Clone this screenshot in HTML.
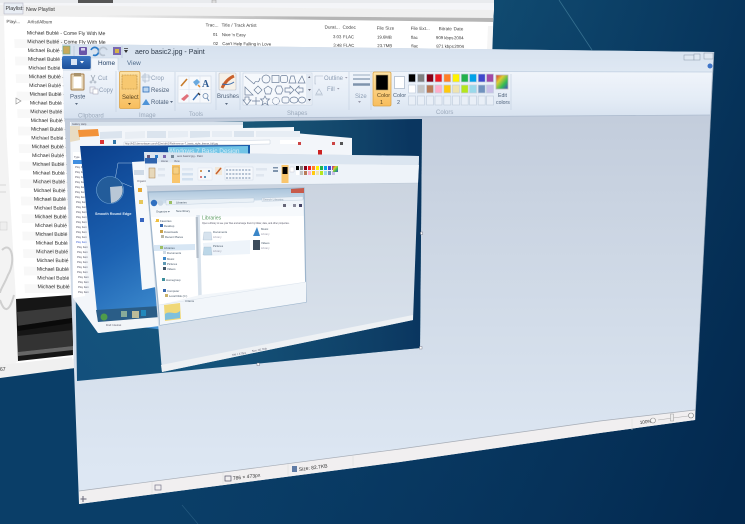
<!DOCTYPE html>
<html><head><meta charset="utf-8"><title>aero basic2.jpg - Paint</title>
<style>
html,body{margin:0;padding:0;width:745px;height:524px;overflow:hidden;background:#0b4168}
svg{display:block;position:absolute;left:0;top:0;filter:blur(.35px)}
text{font-family:"Liberation Sans",sans-serif}
.r{font-size:6px;fill:#4d6079}
.d{font-size:6px;fill:#8d9db3}
.l{font-size:5.1px;fill:#2a2a2a}
.h{font-size:4.6px;fill:#444}
.n{font-size:4.3px;fill:#333}
.lb{font-size:6px;fill:#9aa8ba}
.t{font-size:2.6px;fill:#556}
.e{font-size:2.8px;fill:#456}
.s{font-size:5px;fill:#333}
.p{fill:none;stroke:#6d7f9a;stroke-width:.7}
</style></head><body>
<svg width="745" height="524" viewBox="0 0 745 524" xmlns="http://www.w3.org/2000/svg">
<defs>
<radialGradient id="dk" gradientUnits="userSpaceOnUse" cx="570" cy="10" r="560">
<stop offset="0" stop-color="#1f6c8c"/><stop offset=".4" stop-color="#135478"/><stop offset=".8" stop-color="#0c436c"/><stop offset="1" stop-color="#0a3e68"/></radialGradient>
<linearGradient id="dk2" gradientUnits="userSpaceOnUse" x1="100" y1="300" x2="720" y2="520"><stop offset="0" stop-color="#0c436c" stop-opacity="0"/><stop offset=".5" stop-color="#07355e" stop-opacity=".7"/><stop offset="1" stop-color="#03294f"/></linearGradient>
<linearGradient id="body" gradientUnits="userSpaceOnUse" x1="400" y1="118" x2="400" y2="470"><stop offset="0" stop-color="#c3cddc"/><stop offset=".45" stop-color="#cfd9e6"/><stop offset="1" stop-color="#dde7f3"/></linearGradient>
<linearGradient id="rib" x1="0" y1="0" x2="0" y2="1"><stop offset="0" stop-color="#f1f5fb"/><stop offset=".6" stop-color="#e4ecf6"/><stop offset="1" stop-color="#d6e1ef"/></linearGradient>
<linearGradient id="tb" x1="0" y1="0" x2="0" y2="1"><stop offset="0" stop-color="#d6e1ee"/><stop offset="1" stop-color="#dfe8f3"/></linearGradient>
<linearGradient id="org" x1="0" y1="0" x2="0" y2="1"><stop offset="0" stop-color="#fde3a7"/><stop offset="1" stop-color="#f8bd5c"/></linearGradient>
<linearGradient id="fb" x1="0" y1="0" x2="0" y2="1"><stop offset="0" stop-color="#3c78c4"/><stop offset="1" stop-color="#1c4f99"/></linearGradient>
<linearGradient id="img" gradientUnits="userSpaceOnUse" x1="420" y1="120" x2="80" y2="380"><stop offset="0" stop-color="#2b7488"/><stop offset=".55" stop-color="#17587c"/><stop offset="1" stop-color="#13507c"/></linearGradient>
<linearGradient id="img2" gradientUnits="userSpaceOnUse" x1="420" y1="350" x2="200" y2="360"><stop offset="0" stop-color="#0a3660"/><stop offset="1" stop-color="#0a3660" stop-opacity="0"/></linearGradient>
<linearGradient id="web" gradientUnits="userSpaceOnUse" x1="80" y1="150" x2="190" y2="330"><stop offset="0" stop-color="#0b3f8c"/><stop offset=".5" stop-color="#1c62b2"/><stop offset="1" stop-color="#4a9ad8"/></linearGradient>
<linearGradient id="exT" x1="0" y1="0" x2="0" y2="1"><stop offset="0" stop-color="#a9c3da"/><stop offset="1" stop-color="#d5e3ef"/></linearGradient>
<linearGradient id="bar" gradientUnits="userSpaceOnUse" x1="100" y1="0" x2="300" y2="0"><stop offset="0" stop-color="#bbb" stop-opacity="0"/><stop offset="1" stop-color="#b5b5b5"/></linearGradient>
<linearGradient id="rb" x1="0" y1="0" x2="1" y2="1"><stop offset="0" stop-color="#d33"/><stop offset=".33" stop-color="#dc3"/><stop offset=".66" stop-color="#3b5"/><stop offset="1" stop-color="#44c"/></linearGradient>
<linearGradient id="ic" gradientUnits="userSpaceOnUse" x1="300" y1="160" x2="300" y2="370"><stop offset="0" stop-color="#c9d2de"/><stop offset="1" stop-color="#dbe4ee"/></linearGradient>
</defs>

<!-- desktop -->
<rect width="745" height="524" fill="url(#dk)"/>
<rect width="745" height="524" fill="url(#dk2)"/>
<path d="M559 0L592 50" stroke="#5f9db5" stroke-width=".8" opacity=".5"/>
<path d="M182 505L198 524" stroke="#4c84a2" stroke-width=".7" opacity=".4"/>

<!-- playlist window -->
<polygon points="0,0 494,0 492,60 75,368 0,378" fill="#f4f4f4"/>
<polygon points="0,0 494,0 494,3 0,3" fill="#e9ebee"/>
<rect x="78" y="0" width="35" height="3" fill="#555"/>
<rect x="212" y="0" width="4" height="4" fill="#ddd" stroke="#999" stroke-width=".5"/>
<polygon points="0,3 494,3 494,10 0,5" fill="#f4f5f8"/>
<polygon points="0,5 494,10 493,22 0,16" fill="#efefef"/>
<polygon points="100,15 493,18 493,22 100,18" fill="url(#bar)"/>
<rect x="4" y="3" width="19" height="11" fill="#e9eef5" stroke="#aab" stroke-width=".5"/>
<text x="5.500" y="10" font-size="5.300" fill="#333">Playlist:</text>
<text x="26" y="11" font-size="5.300" fill="#333">New Playlist</text>
<polygon points="4,16 493,22 491,60 72,360 16,365 8,200" fill="#fff"/>
<polygon points="488,26 493,26 492,50 487,50" fill="#f5f5f5"/>
<g transform="matrix(1,.0095,.042,1,-1.400,0)">
<g fill="#f8f8f8">
<rect x="14" y="39" width="60" height="8.750"/><rect x="14" y="56.500" width="60" height="8.750"/><rect x="14" y="74" width="60" height="8.750"/><rect x="14" y="91.500" width="60" height="8.750"/><rect x="14" y="109" width="60" height="8.750"/><rect x="14" y="126.500" width="60" height="8.750"/><rect x="14" y="144" width="60" height="8.750"/><rect x="14" y="161.500" width="60" height="8.750"/><rect x="14" y="179" width="60" height="8.750"/><rect x="14" y="196.500" width="60" height="8.750"/><rect x="14" y="214" width="60" height="8.750"/><rect x="14" y="231.500" width="60" height="8.750"/><rect x="14" y="249" width="60" height="8.750"/><rect x="14" y="266.500" width="60" height="8.750"/><rect x="14" y="284" width="60" height="8.750"/>
</g>
<text class="h" x="7" y="23">Playi...</text><text class="h" x="28" y="23">Artist/Album</text>
<text class="h" x="206" y="24.500">Trac...</text><text class="h" x="222" y="24.500">Title / Track Artist</text>
<text class="h" x="325" y="25.500">Durat...</text><text class="h" x="343" y="25.500">Codec</text>
<text class="h" x="377" y="26">File Size</text><text class="h" x="411" y="26">File Ext...</text><text class="h" x="439" y="26">Bitrate</text><text class="h" x="454" y="26">Date</text>
<text class="l" x="27" y="34.200">Michael Bublé - Come Fly With Me</text>
<text class="l" x="27" y="42.900">Michael Bublé - Come Fly With Me</text>
<text class="l" x="27" y="51.700">Michael Bublé - Come Fly With Me</text>
<text class="l" x="27" y="60.400">Michael Bublé - Come Fly With Me</text>
<text class="l" x="27" y="69.200">Michael Bublé - Come Fly With Me</text>
<text class="l" x="27" y="77.900">Michael Bublé - Come Fly With Me</text>
<text class="l" x="27" y="86.700">Michael Bublé - Come Fly With Me</text>
<text class="l" x="27" y="95.400">Michael Bublé - Come Fly With Me</text>
<text class="l" x="27" y="104.200">Michael Bublé - Come Fly With Me</text>
<text class="l" x="27" y="112.900">Michael Bublé - Come Fly With Me</text>
<text class="l" x="27" y="121.700">Michael Bublé - Come Fly With Me</text>
<text class="l" x="27" y="130.400">Michael Bublé - Come Fly With Me</text>
<text class="l" x="27" y="139.200">Michael Bublé - Come Fly With Me</text>
<text class="l" x="27" y="147.900">Michael Bublé - Come Fly With Me</text>
<text class="l" x="27" y="156.700">Michael Bublé - Come Fly With Me</text>
<text class="l" x="27" y="165.400">Michael Bublé - Come Fly With Me</text>
<text class="l" x="27" y="174.200">Michael Bublé - Come Fly With Me</text>
<text class="l" x="27" y="182.900">Michael Bublé - Come Fly With Me</text>
<text class="l" x="27" y="191.700">Michael Bublé - Come Fly With Me</text>
<text class="l" x="27" y="200.400">Michael Bublé - Come Fly With Me</text>
<text class="l" x="27" y="209.200">Michael Bublé - Come Fly With Me</text>
<text class="l" x="27" y="217.900">Michael Bublé - Come Fly With Me</text>
<text class="l" x="27" y="226.700">Michael Bublé - Come Fly With Me</text>
<text class="l" x="27" y="235.400">Michael Bublé - Come Fly With Me</text>
<text class="l" x="27" y="244.200">Michael Bublé - Come Fly With Me</text>
<text class="l" x="27" y="252.900">Michael Bublé - Come Fly With Me</text>
<text class="l" x="27" y="261.700">Michael Bublé - Come Fly With Me</text>
<text class="l" x="27" y="270.400">Michael Bublé - Come Fly With Me</text>
<text class="l" x="27" y="279.200">Michael Bublé - Come Fly With Me</text>
<text class="l" x="27" y="287.900">Michael Bublé - Come Fly With Me</text>
<text class="n" x="213" y="34">01</text><text class="n" x="222" y="34">Nice 'n Easy</text>
<text class="n" x="333" y="35">3:03</text><text class="n" x="343" y="35">FLAC</text><text class="n" x="377" y="35">19.6MB</text><text class="n" x="411" y="35">flac</text><text class="n" x="436" y="35">909 kbps</text><text class="n" x="454" y="35">2004</text>
<text class="n" x="213" y="43">02</text><text class="n" x="222" y="43">Can't Help Falling in Love</text>
<text class="n" x="333" y="43.500">3:48</text><text class="n" x="343" y="43.500">FLAC</text><text class="n" x="377" y="43.500">23.7MB</text><text class="n" x="411" y="43.500">flac</text><text class="n" x="436" y="43.500">871 kbps</text><text class="n" x="454" y="43.500">2004</text>
</g>
<path d="M16 98l5 3-5 3z" fill="none" stroke="#888" stroke-width=".6"/>
<!-- left pane art -->
<polygon points="0,110 5,110 16,300 18,362 0,366" fill="#f3f3f3"/>
<path d="M2 250C12 240 16 262 8 275C4 285 0 290 0 293M0 300C5 315 10 310 14 295" fill="none" stroke="#cfcfcf" stroke-width="2"/>
<path d="M0 185H6M0 192H6" stroke="#bbb" stroke-width=".6"/>
<rect x="0" y="222" width="7" height="8" fill="#eee" stroke="#ccc" stroke-width=".5"/>
<!-- spectrogram -->
<polygon points="16,299 72,295 73,355 18,361" fill="#161616"/>
<polygon points="17,312 72,306 72,318 18,326" fill="#3a3a3a"/>
<polygon points="17,326 72,318 72,323 18,331" fill="#0a0a0a"/>
<polygon points="18,336 73,330 73,346 18,352" fill="#333"/>
<polygon points="18,352 73,346 73,350 18,356" fill="#666"/>
<polygon points="0,365 72,357 74,368 0,377" fill="#f0f0f0"/>
<text x="0" y="371" font-size="5" fill="#333">67</text>

<!-- paint window -->
<polygon points="62,44 714,52 695,420 600,433 400,462 79,504" fill="url(#body)"/>
<polygon points="62,44 714,52 712,72 63,70" fill="url(#tb)"/>
<polygon points="63,69 118,70 712,72 710,115 64,119" fill="url(#rib)"/>
<path d="M64 119L710 115" stroke="#aebccf" stroke-width=".8"/>
<path d="M63 70H91M118 71L712 72" stroke="#bfcfe1" stroke-width=".7"/>
<path d="M714 52L695 420" stroke="#8fa0b2" stroke-width=".6"/>
<!-- status bar -->
<polygon points="79,491 400,449 600,421 695,410 695,420 600,433 400,462 79,504" fill="#f1eff0"/>
<path d="M79 491L400 449L600 421L695 410" stroke="#a7adb6" stroke-width=".7" fill="none"/>
<path d="M152 482V493M223 473V484M288 464V475M353 456V466M632 419V430" stroke="#ddd" stroke-width=".6"/>
<path d="M83 496v6M80.500 499h6" stroke="#667" stroke-width="1"/>
<rect x="155" y="485" width="6" height="5" fill="none" stroke="#778" stroke-width=".7"/>
<rect x="225" y="476" width="6" height="5" fill="none" stroke="#556" stroke-width=".7"/>
<text class="s" transform="translate(233,480) rotate(-7)">786 × 473px</text>
<rect x="292" y="466" width="5" height="6" fill="#5f7ba5"/>
<text class="s" transform="translate(299,471) rotate(-7)">Size: 82.7KB</text>
<text class="s" transform="translate(640,424) rotate(-7)" style="font-size:4.600px">100%</text>
<circle cx="653" cy="420.500" r="2.500" fill="#f6f6f6" stroke="#888" stroke-width=".6"/>
<path d="M658 420L688 416" stroke="#aaa" stroke-width=".6"/>
<rect x="670.500" y="414" width="3" height="7" fill="#ececec" stroke="#999" stroke-width=".5"/>
<circle cx="691" cy="415.500" r="2.500" fill="#f6f6f6" stroke="#777" stroke-width=".6"/>
<!-- quick access -->
<rect x="63" y="46" width="7" height="8" fill="#c8a95a" stroke="#6a8" stroke-width=".6"/>
<path d="M74 46V58M122 46V58" stroke="#b6c4d6" stroke-width=".7"/>
<rect x="79" y="47" width="8" height="8" rx="1" fill="#6a56a8"/><rect x="81" y="48" width="4" height="2.500" fill="#d8d4ee"/>
<path d="M91 50a4 4 0 1 1 2 5" fill="none" stroke="#2b7bc8" stroke-width="1.700"/>
<path d="M107 50a4 4 0 1 0-2 5" fill="none" stroke="#b9c4d1" stroke-width="1.700"/>
<rect x="113" y="47" width="8" height="8" fill="#7a68b0"/><rect x="115" y="49" width="4" height="4" fill="#d5b24a"/>
<path d="M124 50h4l-2 3z M124 48h4v.8h-4z" fill="#333"/>
<text x="135" y="54" font-size="7" fill="#2d3a4a">aero basic2.jpg - Paint</text>
<g fill="#dfe7f1" stroke="#8a98a9" stroke-width=".5">
<rect x="684" y="55" width="10" height="5"/><rect x="694" y="54" width="6" height="6"/><rect x="704" y="53" width="9" height="6"/></g>
<circle cx="710" cy="66" r="2.500" fill="#3d74c8"/>
<!-- tabs -->
<rect x="62" y="56" width="29" height="13" rx="2" fill="url(#fb)"/>
<rect x="71" y="59" width="6" height="6" fill="#d8e4f4"/><path d="M80 61h4l-2 2.500z" fill="#fff"/>
<path d="M91 70V58H118V70" fill="#f1f5fb" stroke="#c3d0e0" stroke-width=".6"/>
<text x="98" y="65" font-size="6.400" fill="#1f3d63">Home</text>
<text x="127" y="65" font-size="6.400" fill="#4e6a8a">View</text>
<!-- clipboard -->
<rect x="71" y="74" width="13" height="16" rx="1" fill="#e3d3b4" stroke="#a8814f" stroke-width="1"/>
<rect x="73.500" y="77" width="8" height="11" fill="#fff"/>
<rect x="74" y="73" width="7" height="3" fill="#a8926c"/>
<text class="r" x="70" y="98.500">Paste</text><path d="M75 103h3l-1.500 2z" fill="#5a6a80"/>
<path d="M91 75l3 6m1-6l-3 6" stroke="#9aa5b3" stroke-width=".8"/><circle cx="91" cy="82" r="1" fill="none" stroke="#9aa5b3" stroke-width=".6"/><circle cx="95" cy="82" r="1" fill="none" stroke="#9aa5b3" stroke-width=".6"/>
<text class="d" x="98" y="80">Cut</text>
<rect x="90" y="87" width="5" height="6" fill="#f3f5f8" stroke="#aab" stroke-width=".6"/><rect x="93" y="89" width="5" height="5" fill="#fff" stroke="#aab" stroke-width=".6"/>
<text class="d" x="99" y="92">Copy</text>
<path d="M116 71V112" stroke="#c9d5e4" stroke-width=".8"/>
<text class="lb" x="78" y="117.500">Clipboard</text>
<!-- select -->
<rect x="119.500" y="71.500" width="20.500" height="37" rx="1.500" fill="url(#org)" stroke="#dba54b" stroke-width=".8"/>
<rect x="122" y="75" width="15" height="14" fill="#f7c870" stroke="#a47a2f" stroke-width=".6" stroke-dasharray="1 .6"/>
<text x="122" y="99" font-size="6" fill="#5a4520">Select</text><path d="M128 103h3l-1.500 2z" fill="#5a4520"/>
<path d="M143 75h6v6h-6zM141 77h10M145 73v10" fill="none" stroke="#9fb0c4" stroke-width=".6"/>
<text class="d" x="151" y="80">Crop</text>
<rect x="143" y="87" width="6" height="5" fill="#bcd6f0" stroke="#2f6fb8" stroke-width=".8"/>
<text class="r" x="151" y="92">Resize</text>
<path d="M142 105l4-6 4 6z" fill="#4d93d8"/>
<text class="r" x="151" y="104">Rotate</text><path d="M170 101h3l-1.500 2z" fill="#5a6a80"/>
<text class="lb" x="139" y="117">Image</text>
<path d="M175 72V111" stroke="#c9d5e4" stroke-width=".8"/>
<!-- tools -->
<rect x="178" y="76" width="33" height="27" fill="#f7f9fc" stroke="#ccd6e3" stroke-width=".6"/>
<path d="M179.500 89.500H211M189 76V103M200 76V103" stroke="#dbe3ee" stroke-width=".6"/>
<path d="M181 86l6-7" stroke="#c77b2a" stroke-width="1.600"/>
<path d="M193 82l4-3 3 3-4 4z" fill="#6aa9de"/><path d="M198 85l2 2" stroke="#e08a2c" stroke-width="1.500"/>
<text x="202" y="87" font-size="10" font-weight="bold" fill="#2d5a92" style="font-family:'Liberation Serif',serif">A</text>
<path d="M181 99l6-5 2 2-5 5z" fill="#e0707a"/>
<path d="M193 100l5-6" stroke="#3a72b8" stroke-width="1.400"/><path d="M198 93l2 2" stroke="#333" stroke-width="1.400"/>
<circle cx="205.500" cy="96" r="2.500" fill="none" stroke="#6c8ab0" stroke-width=".8"/><path d="M207 98l2 3" stroke="#6c8ab0"/>
<text class="lb" x="189" y="116">Tools</text>
<path d="M216 72V110" stroke="#c9d5e4" stroke-width=".8"/>
<!-- brushes -->
<rect x="219" y="73" width="17" height="17" rx="1" fill="#f6f1e8" stroke="#b7bcc6" stroke-width=".6"/>
<path d="M222 88c3-6 7-10 12-12" stroke="#c9602b" stroke-width="3" fill="none"/><path d="M222 84c4 1 8 1 12-2" stroke="#3f6fb0" stroke-width="1" fill="none"/>
<text class="r" x="217" y="98">Brushes</text><path d="M225 103h3l-1.500 2z" fill="#5a6a80"/>
<path d="M240 72V110" stroke="#c9d5e4" stroke-width=".8"/>
<!-- shapes -->
<rect x="243" y="73" width="69" height="32" fill="#f5f8fc" stroke="#c6d2e1" stroke-width=".6"/>
<rect x="306" y="74" width="6" height="30" fill="#e3eaf3"/>
<g class="p">
<path d="M245 76l9 8"/><path d="M254 84c2-6 4 2 6-6"/><circle cx="266" cy="79" r="4"/><rect x="272" y="75.500" width="7" height="7"/><rect x="280.500" y="75.500" width="7" height="7" rx="2"/><path d="M289 83l2-7h3l2 7z"/><path d="M298 83l4-7 3 7z"/>
<path d="M245 95V87l8 8z"/><path d="M258 86l4 4-4 4-4-4z"/><path d="M268 86l4 3-1.500 5h-5l-1.500-5z"/><path d="M277 86h4l2 4-2 4h-4l-2-4z"/><path d="M285 88h5v-2l4 4-4 4v-2h-5z"/><path d="M303 88h-4v-2l-4 4 4 4v-2h4z"/>
<path d="M245 97h4v3h2l-4 5-4-5h2z"/><path d="M256 97v8M252 101h8"/><path d="M265 96l1.500 3h3l-2.500 2.500 1 3.500-3-2-3 2 1-3.500-2.500-2.500h3z"/><circle cx="276" cy="101" r="3.500" stroke-dasharray="1 .5"/><rect x="282" y="97" width="7" height="6" rx="2"/><ellipse cx="294" cy="100" rx="4" ry="3"/><ellipse cx="302" cy="100" rx="3.500" ry="3"/>
</g>
<path d="M308 78h2.500l-1.250-2zM308 89h3l-1.500 2z" fill="#667"/><path d="M308 99h3l-1.500 2z" fill="#445"/>
<path d="M315 76l8 0M315 76v8h1" stroke="#aab6c6" stroke-width=".6" fill="none"/>
<text class="d" x="324" y="80">Outline</text><path d="M345 77h2.500l-1.250 1.500z" fill="#99a"/>
<path d="M316 94l3-5 3 5zM315 95h8" stroke="#aab6c6" stroke-width=".6" fill="none"/>
<text class="d" x="327" y="91">Fill</text><path d="M337 88h2.500l-1.250 1.500z" fill="#99a"/>
<text class="lb" x="287" y="115">Shapes</text>
<path d="M349 72V110" stroke="#c9d5e4" stroke-width=".8"/>
<path d="M353 75H370" stroke="#7f94ad" stroke-width=".8"/><path d="M353 79H370" stroke="#7f94ad" stroke-width="1.300"/><path d="M353 84.500H370" stroke="#7f94ad" stroke-width="2.500"/>
<text class="d" x="355" y="98">Size</text><path d="M358 101h3l-1.500 2z" fill="#99a"/>
<path d="M371 72V110" stroke="#c9d5e4" stroke-width=".8"/>
<!-- colours -->
<rect x="373" y="72" width="18" height="34" rx="1.500" fill="url(#org)" stroke="#dba54b" stroke-width=".8"/>
<rect x="376" y="75" width="12" height="15" fill="#000" stroke="#b89c60" stroke-width=".6"/>
<text x="377" y="97" font-size="5.500" fill="#5a4520">Color</text><text x="380" y="104" font-size="5.500" fill="#5a4520">1</text>
<rect x="394.500" y="76.500" width="10" height="12" fill="#fff" stroke="#a6b4c6" stroke-width=".7"/>
<text class="r" x="393" y="97" style="font-size:5.500px">Color</text><text class="r" x="397" y="104" style="font-size:5.500px">2</text>
<g stroke="#c3cfde" stroke-width=".7">
<rect x="408.500" y="74" width="7" height="8" fill="#000"/><rect x="417.500" y="74" width="7" height="8" fill="#7f7f7f"/><rect x="426.500" y="74" width="7" height="8" fill="#880015"/><rect x="435" y="74" width="7" height="8" fill="#ed1c24"/><rect x="443.800" y="74" width="7" height="8" fill="#ff7f27"/><rect x="452.500" y="74" width="7" height="8" fill="#fff200"/><rect x="461.200" y="74" width="7" height="8" fill="#22b14c"/><rect x="469.500" y="74" width="7" height="8" fill="#00a2e8"/><rect x="478.200" y="74" width="7" height="8" fill="#3f48cc"/><rect x="486.500" y="74" width="7" height="8" fill="#a349a4"/>
<rect x="408.500" y="85" width="7" height="8" fill="#fff"/><rect x="417.500" y="85" width="7" height="8" fill="#c3c3c3"/><rect x="426.500" y="85" width="7" height="8" fill="#b97a57"/><rect x="435" y="85" width="7" height="8" fill="#ffaec9"/><rect x="443.800" y="85" width="7" height="8" fill="#ffc90e"/><rect x="452.500" y="85" width="7" height="8" fill="#efe4b0"/><rect x="461.200" y="85" width="7" height="8" fill="#b5e61d"/><rect x="469.500" y="85" width="7" height="8" fill="#99d9ea"/><rect x="478.200" y="85" width="7" height="8" fill="#7092be"/><rect x="486.500" y="85" width="7" height="8" fill="#c8bfe7"/>
<g fill="#e9eff7"><rect x="408.500" y="96" width="7" height="9"/><rect x="417.500" y="96" width="7" height="9"/><rect x="426.500" y="96" width="7" height="9"/><rect x="435" y="96" width="7" height="9"/><rect x="443.800" y="96" width="7" height="9"/><rect x="452.500" y="96" width="7" height="9"/><rect x="461.200" y="96" width="7" height="9"/><rect x="469.500" y="96" width="7" height="9"/><rect x="478.200" y="96" width="7" height="9"/><rect x="486.500" y="96" width="7" height="9"/></g>
</g>
<rect x="496" y="75" width="12" height="14" fill="url(#rb)" stroke="#b7b7b7" stroke-width=".8"/>
<text class="r" x="498" y="97" style="font-size:5.200px">Edit</text><text class="r" x="496" y="104" style="font-size:5.200px">colors</text>
<path d="M511 74V110" stroke="#c9d5e4" stroke-width=".8"/>
<text class="lb" x="436" y="114">Colors</text>

<!-- canvas picture -->
<polygon points="73,124 422,119 420,348 77,381" fill="url(#img)"/>
<polygon points="73,124 422,119 420,348 77,381" fill="url(#img2)"/>
<g fill="#fff" stroke="#667" stroke-width=".4"><rect x="419.500" y="346.500" width="2.500" height="2.500"/><rect x="257" y="363" width="2.500" height="2.500"/><rect x="420.500" y="232" width="2" height="2.500"/></g>
<!-- second list window -->
<polygon points="70,122 243,122 243,128 294,127 294,133 352,138 352,160 158,325 98,333 73,298" fill="#f3f6fa"/>
<polygon points="71,122 243,122 243,125 71,126" fill="#d8e2ec"/>
<text class="t" x="72" y="125">Gallery  Help</text>
<polygon points="73,152 84,152 85,296 73,298" fill="#fff"/>
<rect x="73" y="160" width="9" height="4" fill="#3f8ee0"/>
<text class="t" x="74" y="158">Type</text>
<text class="t" x="75" y="168">Play Item</text><text class="t" x="75" y="173">Play Item</text><text class="t" x="75" y="178">Play Item</text><text class="t" x="75" y="183">Play Item</text><text class="t" x="75" y="188">Play Item</text><text class="t" x="75" y="193">Play Item</text><text class="t" x="75" y="198">Play Item</text><text class="t" x="76" y="203">Play Item</text><text class="t" x="76" y="208">Play Item</text><text class="t" x="76" y="213">Play Item</text><text class="t" x="76" y="218">Play Item</text><text class="t" x="76" y="223">Play Item</text><text class="t" x="76" y="228">Play Item</text><text class="t" x="76" y="233">Play Item</text><text class="t" x="76" y="238">Play Item</text><text class="t" x="76" y="243" style="fill:#3c5fd0">Play Item</text><text class="t" x="77" y="248">Play Item</text><text class="t" x="77" y="253">Play Item</text><text class="t" x="77" y="258">Play Item</text><text class="t" x="77" y="263">Play Item</text><text class="t" x="77" y="268">Play Item</text><text class="t" x="77" y="273">Play Item</text><text class="t" x="78" y="278">Play Item</text><text class="t" x="78" y="283">Play Item</text><text class="t" x="78" y="288">Play Item</text><text class="t" x="78" y="293">Play Item</text>
<polygon points="70,126 80,126 80,140 70,142" fill="#e8dcc4"/>
<polygon points="78,130 98,129 99,136 79,137" fill="#f2923a"/>
<polygon points="100,132 122,131 122,138 100,139" fill="#dbe4ee"/>
<polygon points="125,132 145,131 145,138 125,139" fill="#e9eef4"/>
<polygon points="147,131 166,131 166,138 147,138" fill="#dbe4ee"/>
<polygon points="168,131 188,131 188,137 168,138" fill="#e7edf4"/>
<polygon points="190,131 210,131 210,137 190,138" fill="#dbe4ee"/>
<polygon points="212,131 232,131 232,137 212,137" fill="#e7edf4"/>
<polygon points="234,131 254,131 254,137 234,137" fill="#dbe4ee"/>
<polygon points="256,131 300,131 300,137 256,137" fill="#e7edf4"/>
<polygon points="124,142 270,140 270,144 124,146" fill="#fff" stroke="#b7c4d3" stroke-width=".4"/>
<text class="t" x="125" y="144.500">http://h52.demonlayer.com/h32ex/d/e2/Rsthmemon-7_basic_style_theme_full.jpg</text>
<rect x="280" y="140" width="20" height="4" fill="#fff"/>
<rect x="332" y="142" width="3" height="3" fill="#c44"/><rect x="340" y="142" width="3" height="3" fill="#555"/>
<rect x="298" y="142" width="3" height="3" fill="#c44"/><rect x="100" y="140" width="4" height="4" fill="#d33"/><rect x="113" y="140" width="3" height="4" fill="#37a"/>
<!-- browser page -->
<polygon points="80,146 250,145 250,156 145,156 165,330 98,322" fill="url(#web)"/>
<polygon points="168,147 248,146 248,155 168,155" fill="#71c4e6"/>
<text x="168" y="153" font-size="6.500" fill="#e8f6fb" opacity=".85">Windows 7 Basic Design</text>
<polygon points="318,150 322,150 322,155 318,156" fill="#c22"/>
<path d="M115 180L118 163H132M115 180L132 187" stroke="#a7c6e6" stroke-width=".5" fill="none"/>
<circle cx="110" cy="190" r="13.500" fill="#235c9a"/><circle cx="110" cy="190" r="13.500" fill="none" stroke="#6ea3d3" stroke-width=".6"/>
<path d="M110 187L122 186A13 13 0 0 1 111 203Z" fill="#b9c7d6"/>
<text x="95" y="215" font-size="3.700" fill="#dce9f6" font-weight="bold">Smooth Round Edge</text>
<polygon points="96,310 160,306 160,318 98,322" fill="#2a5d87"/>
<circle cx="104" cy="317" r="3.500" fill="#4f9c4a"/><rect x="121" y="311" width="6" height="6" fill="#8a9"/><rect x="132" y="311" width="7" height="7" fill="#bb9"/><rect x="141" y="310" width="5" height="6" fill="#28b"/>
<polygon points="98,322 160,317 160,326 99,333" fill="#f2f5f8"/>
<text class="t" x="106" y="326">Find:   Internet</text>
<!-- white window behind explorer -->
<polygon points="132,162 165,160 165,285 142,290" fill="#f5f8fb"/>
<rect x="134" y="170" width="10" height="5" fill="#cfdae6"/><rect x="138" y="188" width="4" height="4" fill="#e6a932"/><rect x="139" y="200" width="4" height="4" fill="#e6c75a"/><rect x="140" y="218" width="4" height="4" fill="#3765c0"/>
<text class="t" x="137" y="182">Organize</text>
<!-- inner paint -->
<polygon points="144,152 419,156 413,320 162,372" fill="url(#ic)"/>
<polygon points="144,152 419,156 418.700,165 144.500,162" fill="#dbe5f0"/>
<polygon points="145,162 419,165 418,183 146,186" fill="#eef3f9"/>
<polygon points="161,365 413,315 413,320 162,372" fill="#eef1f4"/>
<path d="M146 186L418 183" stroke="#b4c1d1" stroke-width=".4"/>
<text class="t" transform="translate(232,356) rotate(-10)">786 × 473px</text>
<text class="t" transform="translate(252,352) rotate(-10)">Size: 82.7KB</text>
<rect x="147" y="155" width="3" height="3" fill="#657"/><rect x="155" y="155" width="3" height="3" fill="#2b7bc8"/><rect x="163" y="155" width="3" height="3" fill="#7a68b0"/><rect x="171" y="155" width="3" height="3" fill="#789"/>
<text class="t" x="177" y="157">aero basic2.jpg - Paint</text>
<rect x="145" y="158" width="12" height="5.500" fill="#2e63ad"/>
<text class="t" x="161" y="162">Home</text><text class="t" x="174" y="162">View</text>
<rect x="149" y="168" width="6" height="10" fill="#e7d8ba" stroke="#a8814f" stroke-width=".5"/>
<rect x="158" y="168" width="7" height="2.500" fill="#dfe6ef"/><rect x="158" y="174" width="7" height="2.500" fill="#dfe6ef"/>
<rect x="172" y="165" width="8" height="18" fill="#f9c56c"/><rect x="173" y="167" width="6" height="7" fill="#f6cf83" stroke="#a47a2f" stroke-width=".3"/>
<rect x="182" y="168" width="11" height="2.500" fill="#dfe7f1"/><rect x="182" y="173" width="11" height="2.500" fill="#d2e0ef"/><rect x="182" y="178" width="11" height="2.500" fill="#d2e0ef"/>
<rect x="198" y="168" width="14" height="12" fill="#f6f8fb" stroke="#ccd6e2" stroke-width=".3"/><circle cx="201" cy="171" r="1" fill="#c77b2a"/><circle cx="209" cy="171" r="1" fill="#2d5a92"/><circle cx="201" cy="177" r="1" fill="#c55"/><circle cx="205" cy="177" r="1" fill="#37a"/>
<rect x="215" y="167" width="7" height="8" fill="#f1e7d8"/><path d="M216 174l5-6" stroke="#c9602b" stroke-width="1.500"/>
<rect x="225" y="167" width="28" height="13" fill="#f5f8fc" stroke="#b7c4d6" stroke-width=".3"/>
<path d="M226 170h25M226 174h25M226 178h25" stroke="#8ea1ba" stroke-width="1.200" stroke-dasharray="2 1.200"/>
<rect x="256" y="168" width="11" height="2.500" fill="#dfe6ef"/><rect x="256" y="174" width="8" height="2.500" fill="#dfe6ef"/>
<rect x="273" y="167" width="5" height="1.500" fill="#7f94ad"/><rect x="273" y="170" width="5" height="2" fill="#7f94ad"/>
<rect x="281.500" y="165" width="7" height="18" fill="#f9c56c"/><rect x="282.500" y="167" width="5" height="7" fill="#000"/>
<rect x="290" y="167" width="4" height="5" fill="#fff" stroke="#aab" stroke-width=".3"/>
<g><rect x="296" y="166" width="3" height="4" fill="#000"/><rect x="300" y="166" width="3" height="4" fill="#7f7f7f"/><rect x="304" y="166" width="3" height="4" fill="#880015"/><rect x="308" y="166" width="3" height="4" fill="#ed1c24"/><rect x="312" y="166" width="3" height="4" fill="#ff7f27"/><rect x="316" y="166" width="3" height="4" fill="#fff200"/><rect x="320" y="166" width="3" height="4" fill="#22b14c"/><rect x="324" y="166" width="3" height="4" fill="#00a2e8"/><rect x="328" y="166" width="3" height="4" fill="#3f48cc"/><rect x="332" y="166" width="3" height="4" fill="#a349a4"/>
<rect x="296" y="171" width="3" height="4" fill="#fff"/><rect x="300" y="171" width="3" height="4" fill="#c3c3c3"/><rect x="304" y="171" width="3" height="4" fill="#b97a57"/><rect x="308" y="171" width="3" height="4" fill="#ffaec9"/><rect x="312" y="171" width="3" height="4" fill="#ffc90e"/><rect x="316" y="171" width="3" height="4" fill="#efe4b0"/><rect x="320" y="171" width="3" height="4" fill="#b5e61d"/><rect x="324" y="171" width="3" height="4" fill="#99d9ea"/><rect x="328" y="171" width="3" height="4" fill="#7092be"/><rect x="332" y="171" width="3" height="4" fill="#c8bfe7"/></g>
<rect x="333" y="166" width="5" height="6" fill="url(#rb)"/>
<!-- explorer -->
<polygon points="148,192 304,188 306,302 160,325" fill="#fff"/>
<polygon points="148,192 304,188 304.400,199 148.500,204" fill="url(#exT)"/>
<polygon points="148.500,204 304.400,199 304.500,206 149,210" fill="#f0f5fa"/>
<polygon points="149,210 304.500,206 304.600,216 149.500,217" fill="#f6f9fc"/>
<path d="M148 192L160 325L306 302L304 188Z" fill="none" stroke="#9db5cc" stroke-width="1.200"/>
<polygon points="291,189 304,188 304,193 291,193" fill="#c75a4a"/>
<circle cx="154" cy="203" r="3.200" fill="#2f6fc0"/><circle cx="160.500" cy="203" r="2.800" fill="#c8d6e4"/>
<polygon points="166,200 254,198 254,202 166,205" fill="#e9f0f6" stroke="#a7bcd0" stroke-width=".3"/>
<rect x="169" y="201" width="3" height="3" fill="#9cbf66"/>
<text class="e" x="176" y="203.500">Libraries</text>
<polygon points="262,198 303,196.500 303,200 262,201.500" fill="#eaf0f6" stroke="#a7bcd0" stroke-width=".3"/>
<text class="e" x="263" y="200.500" style="fill:#89a">Search Libraries</text>
<text class="e" x="156" y="212.500">Organize ▾</text><text class="e" x="176" y="212">New library</text>
<rect x="283" y="204" width="3" height="3" fill="#667"/><rect x="293" y="204" width="3" height="3" fill="#889"/><rect x="299" y="204" width="3" height="3" fill="#446"/>
<path d="M198 215L200 296" stroke="#d8e2ec" stroke-width="3.500"/>
<path d="M196.800 217L197.600 258" stroke="#b4bfcb" stroke-width="2.200"/>
<polygon points="200,295 306,282 306,302 160,325 159,305" fill="#f2f6fa"/>
<path d="M159 305L306 282" stroke="#dbe3ec" stroke-width=".5"/>
<polygon points="154,245 195,244 195,250 154,251" fill="#d7e6f4"/>
<polygon points="164,305 180,303 181,319 165,321" fill="#f0d878"/>
<path d="M165 314c5-4 10 2 15-3v7l-15 2z" fill="#7fc0dd"/>
<text class="e" x="185" y="302">4 items</text>
<polygon points="155,222 156,222 157,220" fill="#e6b53a"/>
<rect x="156" y="219" width="3" height="3" fill="#f0c040"/>
<text class="e" x="160" y="222">Favorites</text>
<rect x="160" y="224" width="3" height="3" fill="#3a6ab0"/><text class="e" x="164" y="227">Desktop</text>
<rect x="160" y="230" width="3" height="3" fill="#c9a24a"/><text class="e" x="164" y="233">Downloads</text>
<rect x="161" y="235" width="3" height="3" fill="#b8b8a8"/><text class="e" x="165" y="238">Recent Places</text>
<rect x="160" y="246" width="3" height="3" fill="#9cbf66"/><text class="e" x="164" y="249">Libraries</text>
<text class="e" x="167" y="254">Documents</text><text class="e" x="167" y="260">Music</text><text class="e" x="167" y="265">Pictures</text><text class="e" x="167" y="270">Videos</text>
<rect x="163" y="251" width="3" height="3" fill="#cfdbe6"/><rect x="163" y="257" width="3" height="3" fill="#3a86c8"/><rect x="163" y="262" width="3" height="3" fill="#5f9ab5"/><rect x="163" y="267" width="3" height="3" fill="#456"/>
<rect x="162" y="278" width="3" height="3" fill="#3e8f9c"/><text class="e" x="166" y="281">Homegroup</text>
<rect x="163" y="289" width="3" height="3" fill="#3a6ab0"/><text class="e" x="167" y="292">Computer</text>
<rect x="165" y="294" width="3" height="3" fill="#c9b26a"/><text class="e" x="169" y="297">Local Disk (C:)</text>
<text x="202" y="219.500" font-size="5" fill="#5c9c62">Libraries</text>
<text class="t" x="202" y="224" style="font-size:2.300px">Open a library to see your files and arrange them by folder, date, and other properties.</text>
<polygon points="203,243 250,240 250,254 204,256" fill="#eef4fa"/>
<path d="M204 232h7l1 8h-9z" fill="#d7e3ee" stroke="#9db2c6" stroke-width=".3"/>
<text class="e" x="213" y="233">Documents</text><text class="e" x="213" y="238" style="fill:#99a">Library</text>
<path d="M253 236l4-9 3 9z" fill="#3a86c8"/>
<text class="e" x="261" y="230">Music</text><text class="e" x="261" y="235" style="fill:#99a">Library</text>
<path d="M204 247h7l1 8h-9z" fill="#bcd7e8" stroke="#9db2c6" stroke-width=".3"/>
<text class="e" x="213" y="247">Pictures</text><text class="e" x="213" y="252" style="fill:#99a">Library</text>
<rect x="253" y="240" width="7" height="10" fill="#3e4c5a"/>
<text class="e" x="261" y="244">Videos</text><text class="e" x="261" y="249" style="fill:#99a">Library</text>
</svg>
</body></html>
